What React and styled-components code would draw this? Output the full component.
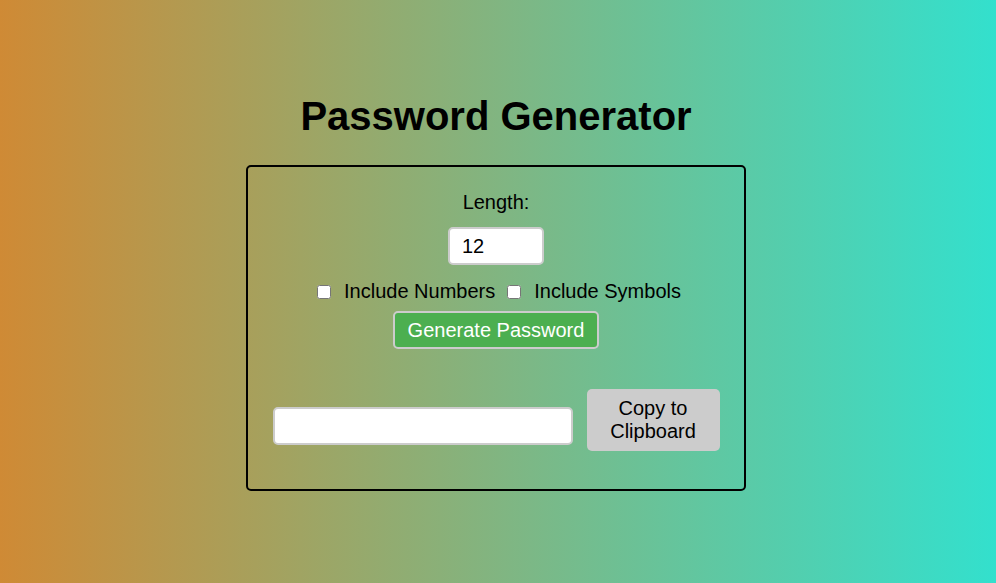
import React, { useState } from 'react';
import styled, { createGlobalStyle } from 'styled-components';

const GlobalStyle = createGlobalStyle`
  html, body {
    margin: 0;
    padding: 0;
    height: 100%;
  }
  body {
    font-family: "Liberation Sans", Arial, sans-serif;
    background: linear-gradient(to right, #cf8a35, #33e0cd);
    min-height: 583px;
  }
`;

const Page = styled.div`
  display: flex;
  flex-direction: column;
  align-items: center;
  padding: 94px 4px 0 0;
`;

const Title = styled.h1`
  margin: 0 0 26px;
  font-size: 40px;
  font-weight: 700;
  color: #000;
`;

const Card = styled.div`
  box-sizing: border-box;
  width: 500px;
  border: 2px solid #000;
  border-radius: 5px;
  padding: 24px 24px 38px;
  display: flex;
  flex-direction: column;
  align-items: center;
`;

const Label = styled.label`
  font-size: 20px;
  color: #000;
`;

const Field = styled.input`
  font-family: inherit;
  font-size: 20px;
  padding: 0 12px;
  height: 38px;
  box-sizing: border-box;
  width: ${p => p.$width}px;
  border: 2px solid #ccc;
  border-radius: 5px;
  background: #fff;
  color: #000;
  outline: none;
`;

const LengthField = styled(Field)`
  margin-top: 13px;
`;

const OutputField = styled(Field)`
  margin-bottom: 6px;
`;

const Options = styled.div`
  display: flex;
  align-items: center;
  gap: 12px;
  margin: 15px 0 0 6px;
  font-size: 20px;
`;

const Option = styled.label`
  display: flex;
  align-items: center;
  gap: 13px;

  input {
    margin: 0;
    width: 14px;
    height: 14px;
  }
`;

const Button = styled.button`
  font-family: inherit;
  font-size: 20px;
  border-radius: 5px;
  cursor: pointer;
  line-height: 23px;
  box-sizing: border-box;
  ${p => p.$primary ? `
    background: #4caf50;
    color: #fff;
    border: 2px solid #ccc;
    padding: 0 13px;
    height: 38px;
  ` : `
    background: #ccc;
    color: #000;
    border: none;
    padding: 8px 10px;
    width: 133px;
  `}
`;

const GenerateButton = styled(Button)`
  margin-top: 8px;
`;

const OutputRow = styled.div`
  display: flex;
  align-items: flex-end;
  gap: 14px;
  margin-top: 40px;
`;

export default function App() {
  const [length, setLength] = useState(12);
  const [password, setPassword] = useState('');

  return (
    <>
      <GlobalStyle />
      <Page>
        <Title>Password Generator</Title>
        <Card>
          <Label htmlFor="length">Length:</Label>
          <LengthField id="length" type="number" $width={96} value={length} onChange={e => setLength(e.target.value)} />
          <Options>
            <Option><input type="checkbox" />Include Numbers</Option>
            <Option><input type="checkbox" />Include Symbols</Option>
          </Options>
          <GenerateButton $primary>Generate Password</GenerateButton>
          <OutputRow>
            <OutputField type="text" readOnly $width={300} value={password} />
            <Button onClick={() => setPassword('')}>Copy to Clipboard</Button>
          </OutputRow>
        </Card>
      </Page>
    </>
  );
}
